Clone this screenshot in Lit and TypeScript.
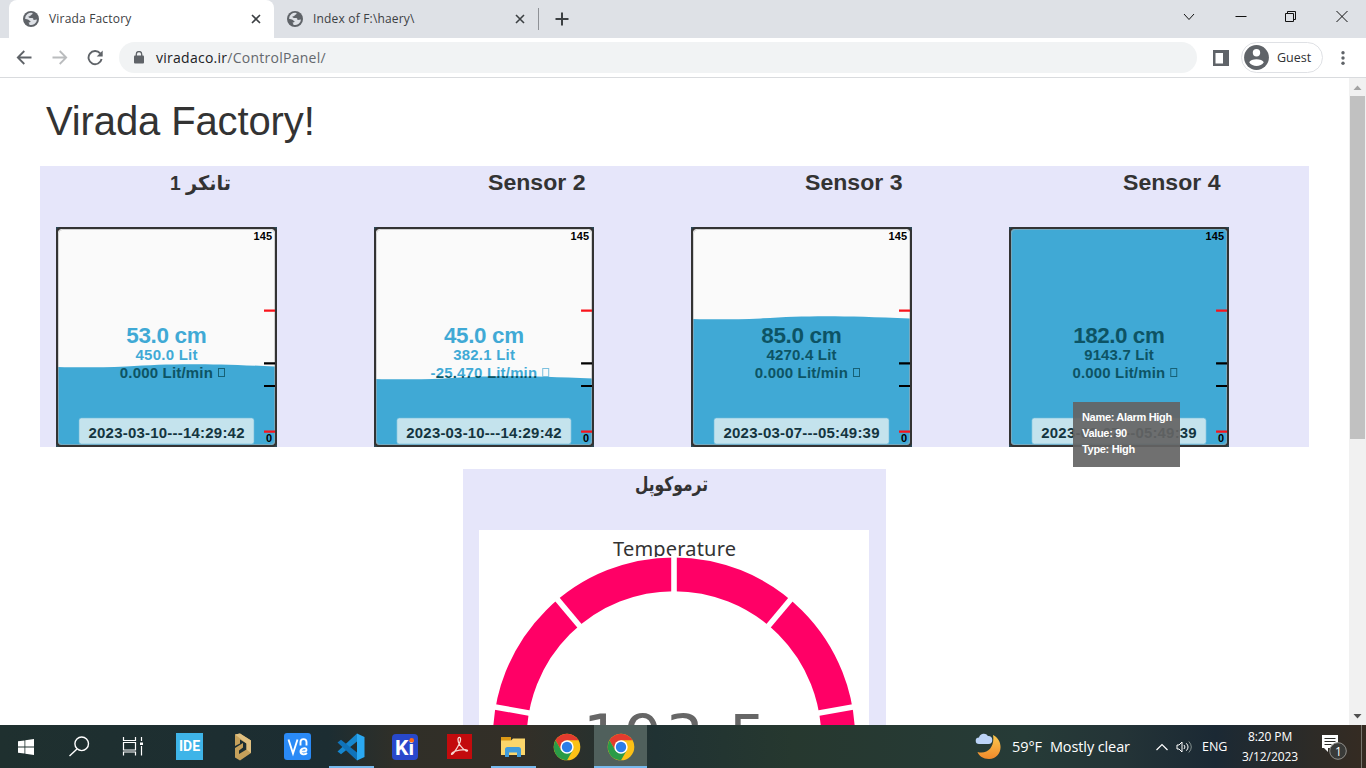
import { LitElement, html, css, svg } from "lit";
import { customElement, property } from "lit/decorators.js";

interface Tank {
  id: string;
  title: string;
  titleWidth: number;
  width: number;
  level: string;
  levelWidth: number;
  volume: string;
  volumeWidth: number;
  flow: string;
  flowWidth: number;
  time: string;
  surface: number;
}

const TANKS: Tank[] = [
  { id: "t1", title: "تانکر 1", titleWidth: 61, width: 221, level: "53.0 cm", levelWidth: 80.5, volume: "450.0 Lit", volumeWidth: 62, flow: "0.000 Lit/min", flowWidth: 93, time: "2023-03-10---14:29:42", surface: 140 },
  { id: "t2", title: "Sensor 2", titleWidth: 97.5, width: 220, level: "45.0 cm", levelWidth: 80.5, volume: "382.1 Lit", volumeWidth: 62, flow: "-25.470 Lit/min", flowWidth: 107, time: "2023-03-10---14:29:42", surface: 152 },
  { id: "t3", title: "Sensor 3", titleWidth: 97.5, width: 221, level: "85.0 cm", levelWidth: 80.5, volume: "4270.4 Lit", volumeWidth: 70, flow: "0.000 Lit/min", flowWidth: 93, time: "2023-03-07---05:49:39", surface: 92 },
  { id: "t4", title: "Sensor 4", titleWidth: 97.5, width: 220, level: "182.0 cm", levelWidth: 92, volume: "9143.7 Lit", volumeWidth: 70, flow: "0.000 Lit/min", flowWidth: 93, time: "2023-03-07---05:49:39", surface: -10 },
];

@customElement("tank-gauge")
class TankGauge extends LitElement {
  @property({ attribute: false }) tank!: Tank;

  static styles = css`
    :host { display: block; }
    svg { display: block; font-family: "Liberation Sans", Arial, sans-serif; font-weight: bold; }
    .level { font-size: 22.5px; }
    .small { font-size: 15px; }
    .scale { font-size: 11px; fill: #000; }
    .time { font-size: 15px; fill: #14353f; }
  `;

  render() {
    const t = this.tank;
    const s = t.surface;
    const flowStart = 116.8 - (t.flowWidth + 13) / 2;
    const fill = "url(#ink)";
    return html`<svg width="${t.width}" height="220" viewBox="0 0 221 220" preserveAspectRatio="none">
      <defs>
        <linearGradient id="ink" gradientUnits="userSpaceOnUse" x1="110" y1="${s - 3.2}" x2="110" y2="${s - 2.6}">
          <stop offset="0" stop-color="#40a9d5"></stop>
          <stop offset="1" stop-color="#0d5364"></stop>
        </linearGradient>
        <clipPath id="inner"><rect x="2" y="2" width="217" height="216" rx="4"></rect></clipPath>
      </defs>
      <rect width="221" height="220" fill="#2b4856"></rect>
      <rect x="1" y="1" width="219" height="218" rx="4" fill="#fafafa" stroke="#333" stroke-width="2"></rect>
      <g clip-path="url(#inner)">
        <path d="M0 ${s} C25 ${s + 0.6} 45 ${s + 0.4} 70 ${s - 0.6} C115 ${s - 3.6} 150 ${s - 3.6} 221 ${s - 0.5} V220 H0Z" fill="#40a9d5"></path>
      </g>
      <rect x="2.5" y="2.5" width="216" height="215" rx="4" fill="none" stroke="#aaa" stroke-opacity=".5"></rect>
      <rect x="1" y="1" width="219" height="218" rx="4.5" fill="none" stroke="#333" stroke-width="2"></rect>
      <text class="level" x="${110.5 - t.levelWidth / 2}" y="116" textLength="${t.levelWidth}" fill="${fill}">${t.level}</text>
      <text class="small" x="${110.5 - t.volumeWidth / 2}" y="133" textLength="${t.volumeWidth}" fill="${fill}">${t.volume}</text>
      <text class="small" x="${flowStart}" y="151" textLength="${t.flowWidth}" fill="${fill}">${t.flow}</text>
      <rect x="${Math.round(flowStart + t.flowWidth + 5.5) + 0.5}" y="141.5" width="6" height="8" fill="none" stroke="${t.id === "t2" ? "#7cc0df" : "#176176"}"></rect>
      <rect x="23" y="191" width="175" height="26" rx="2.5" fill="#c4e3ed" stroke="#6fbddb" stroke-width=".6"></rect>
      <text class="time" x="32.5" y="211" textLength="156">${t.time}</text>
      <path d="M208 83.7H219M208 204.7H219" stroke="#f9131b" stroke-width="2.2"></path>
      <path d="M208 136.3H219M208 159H219" stroke="#000" stroke-width="2.2"></path>
      <text class="scale" x="197.5" y="13" textLength="18.5">145</text>
      <text class="scale" x="210" y="215">0</text>
    </svg>`;
  }
}

@customElement("temp-gauge")
class TempGauge extends LitElement {
  static styles = css`
    :host { display: block; }
    svg { display: block; }
    .title { font-family: "Noto Sans", sans-serif; font-size: 20px; fill: #333; }
    .value { font-family: "DejaVu Sans", sans-serif; font-size: 60px; fill: #666; }
  `;

  render() {
    const cuts = [0, 40, 80, 120, 160, 200, 240, 280, 320];
    return html`<svg width="390" height="390" viewBox="0 0 390 390">
      <text class="title" x="134" y="26" textLength="123">Temperature</text>
      <circle cx="195" cy="208.5" r="182.5" fill="#fff"></circle>
      <circle cx="195" cy="208.5" r="164.2" fill="none" stroke="#ff0066" stroke-width="33.8"></circle>
      ${cuts.map((a) => svg`<path d="M195 64V24" stroke="#fff" stroke-width="5.6" transform="rotate(${a} 195 208.5)"></path>`)}
      <text class="value" x="104" y="228" textLength="184">193.5</text>
    </svg>`;
  }
}

const globe = html`<svg width="16" height="16" viewBox="0 0 16 16">
  <circle cx="8" cy="8" r="8" fill="#5f6368"></circle>
  <path d="M9.5 1.9C9.8 3 9 3.6 8 3.8 7.6 4.9 7 5.4 5.6 5.3 5.4 6.5 6 7 7 7h2.2c1 0 1.2 1 1.3 1.9 1 .2 2-.3 3.5-.5A6 6 0 0 1 6.3 13.8c.2-1-.2-1.5-.9-2 1-.4 2.1-.3 2.3-1.300C6.5 10 6.3 8.8 5 8.400L2 7.700A6.200 6.200 0 0 1 9.5 1.900Z" fill="#dee1e6"></path>
</svg>`;
const cross = html`<svg width="10" height="10" viewBox="0 0 10 10"><path d="M1 1l8 8M9 1L1 9" stroke="#3c4043" stroke-width="1.6"></path></svg>`;

@customElement("browser-chrome")
class BrowserChrome extends LitElement {
  static styles = css`
    :host { display: block; font-family: "Open Sans", "Noto Sans", sans-serif; color: #3c4043; }
    svg { display: block; flex: none; }
    .strip { height: 38px; background: #dee1e6; display: flex; }
    .tab { height: 38px; display: flex; align-items: center; box-sizing: border-box; font-size: 12px; white-space: nowrap; }
    .tab.active { width: 265px; margin-left: 9px; padding: 0 13px 0 14px; background: #fff; border-radius: 8px 8px 0 0; }
    .tab.idle { width: 264px; padding: 0 13px; }
    .name { flex: 1; margin-left: 10px; padding-bottom: 2px; letter-spacing: .18px; }
    .rule { width: 1px; height: 22px; background: #8e9196; margin-top: 8px; }
    .plus { margin: 12px 0 0 16px; }
    .win { margin-left: auto; display: flex; padding-top: 11px; }
    .win svg { width: 12px; height: 12px; fill: none; stroke: #111; }
    .w1 { margin-right: 40px; } .w2 { margin-right: 38px; } .w3 { margin-right: 39px; } .w4 { margin-right: 18px; }
    .bar { height: 39px; background: #fff; border-bottom: 1px solid #d9dbde; display: flex; align-items: center; }
    .nav { display: flex; width: 119px; box-sizing: border-box; padding-left: 16px; gap: 19.500px; }
    .url { width: 1078px; height: 31px; border-radius: 16px; background: #f1f3f4; display: flex; align-items: center; box-sizing: border-box; padding-left: 15px; font-size: 14px; color: #64686d; letter-spacing: .26px; }
    .url svg { margin-right: 12px; }
    .host { color: #202124; }
    .side { margin-left: 16px; }
    .guest { margin-left: 12px; width: 82px; height: 31px; box-sizing: border-box; border: 1px solid #dfe1e5; border-radius: 16px; display: flex; align-items: center; padding-left: 2px; font-size: 12.5px; gap: 8px; color: #303134; }
    .menu { margin-left: 18px; }
  `;

  render() {
    return html`
      <div class="strip">
        <div class="tab active">${globe}<span class="name">Virada Factory</span>${cross}</div>
        <div class="tab idle">${globe}<span class="name">Index of F:\\haery\\</span>${cross}</div>
        <div class="rule"></div>
        <svg class="plus" width="14" height="14" viewBox="0 0 14 14"><path d="M7 .5v13M.5 7h13" stroke="#3c4043" stroke-width="2"></path></svg>
        <div class="win">
          <svg class="w1" viewBox="0 0 12 12"><path d="M1 3l5 5.5L11 3"></path></svg>
          <svg class="w2" viewBox="0 0 12 12"><path d="M.5 5.5h11"></path></svg>
          <svg class="w3" viewBox="0 0 12 12"><path d="M.5 2.5h8v8h-8zM2.5 2.5v-2h8v8h-2"></path></svg>
          <svg class="w4" viewBox="0 0 12 12"><path d="M.5 0l11 11M11.5 0l-11 11"></path></svg>
        </div>
      </div>
      <div class="bar">
        <div class="nav">
          <svg width="16" height="16" viewBox="0 0 16 16" fill="none" stroke="#5f6368" stroke-width="1.8"><path d="M15.5 7.500H2M8.3 1L1.8 7.500l6.500 6.500"></path></svg>
          <svg width="16" height="16" viewBox="0 0 16 16" fill="none" stroke="#babcbe" stroke-width="1.8"><path d="M.5 7.500H14M7.7 1L14.200 7.500l-6.500 6.500"></path></svg>
          <svg width="16" height="16" viewBox="0 0 16 16"><path d="M13.200 3.300A6.600 6.600 0 1 0 14.600 9" fill="none" stroke="#5f6368" stroke-width="1.9"></path><path d="M15.700 .5v6H9.700z" fill="#5f6368"></path></svg>
        </div>
        <div class="url">
          <svg width="10" height="14" viewBox="0 0 10 14"><rect y="4.5" width="10" height="8" rx="1" fill="#5f6368"></rect><path d="M2.3 5V3.200a2.700 2.700 0 0 1 5.400 0V5" fill="none" stroke="#5f6368" stroke-width="1.3"></path></svg>
          <span><span class="host">viradaco.ir</span>/ControlPanel/</span>
        </div>
        <svg class="side" width="16" height="16" viewBox="0 0 16 16"><path d="M0 0h16v16H0zM2.500 3v10.500H10V3z" fill="#5f6368" fill-rule="evenodd"></path></svg>
        <div class="guest">
          <svg width="25" height="25" viewBox="0 0 25 25"><circle cx="12.500" cy="12.500" r="12.400" fill="#5f6368"></circle><circle cx="12.500" cy="7.700" r="3.700" fill="#fff"></circle><path d="M5.200 17.300c1.500-4 13-4 14.600 0-3 5-11.500 5-14.600 0z" fill="#fff"></path></svg>
          <span>Guest</span>
        </div>
        <svg class="menu" width="4" height="14" viewBox="0 0 4 14" fill="#5f6368"><circle cx="2" cy="1.800" r="1.700"></circle><circle cx="2" cy="7" r="1.700"></circle><circle cx="2" cy="12.200" r="1.700"></circle></svg>
      </div>`;
  }
}

const chromeLogo = html`<svg width="28" height="28" viewBox="0 0 28 28">
  <circle cx="14" cy="14" r="13.300" fill="#fbc116"></circle>
  <path d="M2.500 7.350A13.300 13.300 0 0 1 25.500 7.350H14L8.200 17.300z" fill="#e33b2e"></path>
  <path d="M2.500 7.350A13.300 13.300 0 0 0 14 27.300L19.800 17.300 8.200 17.300z" fill="#2a9b47"></path>
  <circle cx="14" cy="14" r="6.700" fill="#fff"></circle><circle cx="14" cy="14" r="5.200" fill="#2b7de9"></circle>
</svg>`;

@customElement("task-bar")
class TaskBar extends LitElement {
  static styles = css`
    :host { display: flex; height: 43px; color: #fff; font-family: "Open Sans", "Noto Sans", sans-serif; background: linear-gradient(90deg, #1f302f 0, #1c2d32 24%, #302f28 29%, #332f27 38%, #203233 48%, #26382f 58%, #263b37 75%, #243437 82%, #1b2934 89%, #2d2b27 96%, #352b22 100%); }
    svg { display: block; flex: none; }
    .apps { display: flex; }
    .cell { width: 54px; height: 43px; display: flex; align-items: center; justify-content: center; box-sizing: border-box; }
    .start { width: 52px; }
    .first { margin-left: 2px; }
    .run { background: linear-gradient(#76b9ed, #76b9ed) center bottom / 45px 2px no-repeat; }
    .on { width: 53px; background: linear-gradient(#76b9ed, #76b9ed) 0 bottom / 100% 2px no-repeat #50605c; }
    .tray { margin-left: auto; display: flex; align-items: center; white-space: nowrap; }
    .weather { font-size: 14.5px; margin-left: 10px; width: 144px; display: flex; gap: 8px; letter-spacing: -.1px; }
    .speaker { margin-left: 8px; }
    .lang { font-size: 12.5px; width: 36px; margin-left: 9px; }
    .clock { font-size: 12px; line-height: 20px; text-align: center; width: 64px; letter-spacing: -.1px; padding-bottom: 0; }
    .note { margin-left: 19px; }
    .edge { width: 1px; height: 43px; background: #77756e; margin: 0 4px 0 14px; }
    .logo { font-family: "Roboto", sans-serif; font-weight: bold; }
  `;

  render() {
    return html`
      <div class="apps">
        <div class="cell start"><svg width="16" height="16" viewBox="0 0 16 16" fill="#fff"><path d="M0 2.300l6.500-.9v6.200H0zM7.300 1.300L16 0v7.600H7.300zM0 8.400h6.500v6.200L0 13.700zM7.300 8.400H16V16l-8.700-1.300z"></path></svg></div>
        <div class="cell"><svg width="22" height="22" viewBox="0 0 22 22" fill="none" stroke="#fff" stroke-width="1.400"><circle cx="13.700" cy="7.800" r="6.800"></circle><path d="M9 13l-7.500 7"></path></svg></div>
        <div class="cell"><svg width="22" height="20" viewBox="0 0 22 20" fill="none" stroke="#fff" stroke-width="1.200"><path d="M1.500 0v3.500h12V0M1.500 18.500v-3.500h12v3.500M1.500 5.500h12v7.500h-12zM19.500 0v4M19.500 9v9.500"></path><rect x="18" y="5.500" width="3" height="2.500" fill="#fff" stroke="none"></rect></svg></div>
        <div class="cell first"><svg width="27" height="27" viewBox="0 0 27 27"><rect width="27" height="27" fill="#3eb4e8"></rect><text class="logo" x="3" y="18" font-size="14.500" textLength="21" lengthAdjust="spacingAndGlyphs" fill="#fff">IDE</text></svg></div>
        <div class="cell"><svg width="20" height="28" viewBox="0 0 20 28"><path d="M2 5.500V1.500L7 .5l11 7v12.500L7 27.500 2 24.500V15l8-5v4.500L6 17.500v3.500L13.500 16.500v-6L7 6.500v4L2 13z" fill="#c6a15b"></path><path d="M2 1.500L7 .5l11 7v12.500l-4.500-3.500v-6z" fill="#e0c081"></path></svg></div>
        <div class="cell"><svg width="27" height="27" viewBox="0 0 27 27"><rect width="27" height="27" rx="3" fill="#2a8af6"></rect><path d="M4.500 6.500l4.500 14L13.500 6.500M16.500 12.500V9c0-3.800 6-3.800 6 0v3.500M23 20c-2 2-6.500 2-6.500-1.500s6-4.500 6-1.500c0 1.500-1.500 1.500-5 1.500" fill="none" stroke="#fff" stroke-width="1.900"></path></svg></div>
        <div class="cell run"><svg width="28" height="28" viewBox="0 0 28 28"><path d="M20 .5v8L4 21.200.5 18.500z" fill="#1687cf"></path><path d="M20 27.500v-8L4 6.800.5 9.500z" fill="#1073ba"></path><path d="M20 .5L27.500 4v20L20 27.500z" fill="#2aa8f2"></path></svg></div>
        <div class="cell"><svg width="26" height="26" viewBox="0 0 26 26"><rect width="26" height="26" rx="4" fill="#2848cb"></rect><text class="logo" x="3" y="21" font-size="21" textLength="19" lengthAdjust="spacingAndGlyphs" fill="#fff">Ki</text><circle cx="19.700" cy="6.300" r="2.300" fill="#ff6a18"></circle></svg></div>
        <div class="cell"><svg width="25" height="25" viewBox="0 0 25 25"><rect width="25" height="25" fill="#c30b0d"></rect><path d="M4.500 20c0-3 16-6 16-3.500 0 3-9.500-5-9.500-11 0-3 3-3 2.500.5C13 10.500 4.500 23 4.500 20z" fill="none" stroke="#f7d8d2" stroke-width="1.300"></path></svg></div>
        <div class="cell run"><svg width="26" height="22" viewBox="0 0 26 22"><path d="M1 1h10v4H1z" fill="#dc9a16"></path><path d="M1 4.500h10l2-2h12V19H1z" fill="#fbd66b"></path><path d="M5 21V13.500q0-2.500 2.500-2.500h11q2.500 0 2.500 2.500V21h-4v-4.500H9V21z" fill="#409cdc"></path></svg></div>
        <div class="cell">${chromeLogo}</div>
        <div class="cell on">${chromeLogo}</div>
      </div>
      <div class="tray">
        <svg width="27" height="27" viewBox="0 0 27 27"><defs><linearGradient id="m" x2="0" y2="1"><stop stop-color="#fbc94e"></stop><stop offset="1" stop-color="#f0892b"></stop></linearGradient></defs><path d="M18 2C30 8 27 26 14 26 8 26 4 23 2.500 19 13 22 20 13 18 2z" fill="url(#m)"></path><path d="M4 11a3.300 3.300 0 0 1 0-6.600A5 5 0 0 1 13 3a4 4 0 0 1 .5 8z" fill="#bcd4f8"></path></svg>
        <div class="weather"><span>59°F</span><span>Mostly clear</span></div>
        <svg width="12" height="8" viewBox="0 0 12 8"><path d="M.5 7L6 1.500 11.500 7" fill="none" stroke="#fff" stroke-width="1.200"></path></svg>
        <svg class="speaker" width="17" height="14" viewBox="0 0 17 14" fill="none" stroke="#fff"><path d="M1 5h2l3-3v10L3 9H1z"></path><path d="M8 5q2 2 0 4M10.300 3.300q3.500 3.700 0 7.400"></path><path d="M12.800 1.500q5 5.500 0 11" stroke="#84908e"></path></svg>
        <div class="lang">ENG</div>
        <div class="clock">8:20 PM<br>3/12/2023</div>
        <svg class="note" width="26" height="27" viewBox="0 0 26 27"><path d="M1 2h16v13H7v4l-4-4H1z" fill="#fff"></path><path d="M3.500 5.500h11M3.500 8.500h11M3.500 11.500h7" stroke="#2c2c28"></path><circle cx="17" cy="18" r="8.300" fill="#393a38" stroke="#92918d"></circle><text x="14" y="22.500" font-size="12" fill="#fff">1</text></svg>
        <div class="edge"></div>
      </div>`;
  }
}

@customElement("app-root")
class AppRoot extends LitElement {
  static styles = css`
    :host { display: flex; flex-direction: column; width: 1366px; height: 768px; overflow: hidden; background: #fff; font-family: "Liberation Sans", Arial, sans-serif; color: #333; }
    .view { flex: 1; min-height: 0; display: flex; overflow: hidden; }
    .page { flex: 1; overflow: hidden; }
    h1 { margin: 0 0 0 46px; font-weight: normal; font-size: 40px; line-height: 44px; height: 88px; box-sizing: border-box; padding-top: 21px; letter-spacing: -.12px; }
    .tanks { margin-left: 40px; width: 1269px; height: 281px; background: #e6e6fa; display: grid; grid-template-columns: 318px 317px 318px 316px; }
    .tank { position: relative; }
    .head { height: 61px; padding-left: 129.5px; box-sizing: border-box; }
    .head text, .cap text { font-family: "Liberation Sans", "DejaVu Sans", sans-serif; font-size: 22.5px; font-weight: bold; fill: #333; }
    .head svg, .cap { display: block; overflow: visible; }
    .head text.fa, .cap text { font-size: 20px; }
    tank-gauge { margin-left: 16px; }
    .tip { position: absolute; left: 80px; top: 236px; width: 107px; height: 65px; box-sizing: border-box; padding: 7px 9px; background: rgba(100,100,100,.92); color: #fff; font-size: 11px; font-weight: bold; line-height: 16px; white-space: nowrap; letter-spacing: -.32px; z-index: 2; }
    .thermo { margin: 22px 0 0 463px; width: 423px; height: 500px; background: #e6e6fa; }
    temp-gauge { margin-left: 16px; width: 390px; background: #fff; }
    .scroll { width: 17px; background: #f1f1f1; display: flex; flex-direction: column; }
    .thumb { width: 15px; height: 343px; margin: 1px; background: #c1c1c1; }
    .scroll svg { display: block; }
    .grow { flex: 1; }
  `;

  render() {
    return html`
      <browser-chrome></browser-chrome>
      <div class="view">
        <div class="page">
          <h1>Virada Factory!</h1>
          <div class="tanks">
            ${TANKS.map((t) => html`<div class="tank">
              <div class="head"><svg width="${t.titleWidth}" height="61"><text class="${t.id === "t1" ? "fa" : ""}" x="0" y="24" textLength="${t.titleWidth}" lengthAdjust="spacingAndGlyphs">${t.title}</text></svg></div>
              <tank-gauge .tank=${t}></tank-gauge>
              ${t.id === "t4" ? html`<div class="tip">Name: Alarm High<br>Value: 90<br>Type: High</div>` : ""}
            </div>`)}
          </div>
          <div class="thermo">
            <svg class="cap" width="423" height="61"><text x="172" y="22" textLength="73" lengthAdjust="spacingAndGlyphs">ترموکوپل</text></svg>
            <temp-gauge></temp-gauge>
          </div>
        </div>
        <div class="scroll">
          <svg width="17" height="17" viewBox="0 0 17 17"><path d="M4.500 12l4-4.500 4 4.500z" fill="#a3a3a3"></path></svg>
          <div class="thumb"></div>
          <div class="grow"></div>
          <svg width="17" height="17" viewBox="0 0 17 17"><path d="M4.500 6l4 4.500 4-4.500z" fill="#505050"></path></svg>
        </div>
      </div>
      <task-bar></task-bar>`;
  }
}
